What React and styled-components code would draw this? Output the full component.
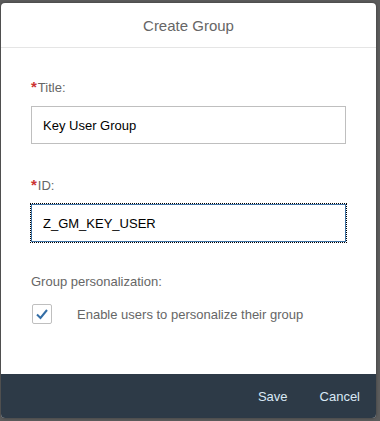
import React from "react";
import styled, { createGlobalStyle } from "styled-components";

const GlobalStyle = createGlobalStyle`
  html, body {
    margin: 0;
    padding: 0;
    background: #5c5c5c;
    font-family: "Liberation Sans", Arial, sans-serif;
  }
`;

const Page = styled.div`
  width: 380px;
  height: 421px;
  box-sizing: border-box;
  padding: 3px 4px 3px 1px;
`;

const Dialog = styled.div`
  height: 100%;
  display: flex;
  flex-direction: column;
  background: #ffffff;
  border-radius: 4px;
  overflow: hidden;
  box-shadow: 0 0 3px rgba(0, 0, 0, 0.4);
`;

const Header = styled.div`
  height: 44px;
  flex-shrink: 0;
  display: flex;
  align-items: center;
  justify-content: center;
  border-bottom: 1px solid #e5e5e5;
  color: #666666;
  font-size: 15px;
`;

const Content = styled.div`
  flex: 1;
  padding: 30px 30px 0 30px;
  display: flex;
  flex-direction: column;
`;

const Label = styled.label`
  display: block;
  color: #666666;
  font-size: 13px;
  line-height: 18px;
  margin-bottom: 9px;
  margin-top: ${(p) => p.$top || 0}px;
`;

const Star = styled.span`
  color: #cc3333;
  font-weight: bold;
  font-size: 15px;
  margin-right: 1px;
`;

const Input = styled.input`
  box-sizing: border-box;
  width: 315px;
  height: 38px;
  padding: 0 11px;
  font-family: inherit;
  font-size: 13px;
  color: #000000;
  background: #ffffff;
  border: 1px solid ${(p) => (p.$focused ? "#3f73a6" : "#bfbfbf")};
  outline: ${(p) => (p.$focused ? "1px dotted #000000" : "none")};
  outline-offset: 0;
`;

const CheckRow = styled.div`
  display: flex;
  align-items: center;
  margin-left: 1px;
  margin-top: 4px;
`;

const Box = styled.span`
  box-sizing: border-box;
  width: 20px;
  height: 20px;
  border: 1px solid #bfbfbf;
  border-radius: 2px;
  display: flex;
  align-items: center;
  justify-content: center;
  background: #ffffff;
`;

const CheckText = styled.span`
  margin-left: 25px;
  color: #666666;
  font-size: 13px;
`;

const Footer = styled.div`
  height: 44px;
  flex-shrink: 0;
  background: #2d3a47;
  display: flex;
  align-items: center;
  justify-content: flex-end;
  padding-right: 16px;
  gap: 32px;
`;

const FooterButton = styled.button`
  background: none;
  border: none;
  padding: 0;
  font-family: inherit;
  font-size: 13px;
  color: #d9e8f5;
  cursor: pointer;
`;

export default function App() {
  return (
    <>
      <GlobalStyle />
      <Page>
        <Dialog>
          <Header>Create Group</Header>
          <Content>
            <Label>
              <Star>*</Star>Title:
            </Label>
            <Input defaultValue="Key User Group" />
            <Label $top={32}>
              <Star>*</Star>ID:
            </Label>
            <Input $focused defaultValue="Z_GM_KEY_USER" />
            <Label $top={31}>Group personalization:</Label>
            <CheckRow>
              <Box>
                <svg width="14" height="14" viewBox="0 0 14 14">
                  <path
                    d="M2 7.5 L5.5 11 L12 3"
                    fill="none"
                    stroke="#346ea6"
                    strokeWidth="2"
                  />
                </svg>
              </Box>
              <CheckText>Enable users to personalize their group</CheckText>
            </CheckRow>
          </Content>
          <Footer>
            <FooterButton>Save</FooterButton>
            <FooterButton>Cancel</FooterButton>
          </Footer>
        </Dialog>
      </Page>
    </>
  );
}
